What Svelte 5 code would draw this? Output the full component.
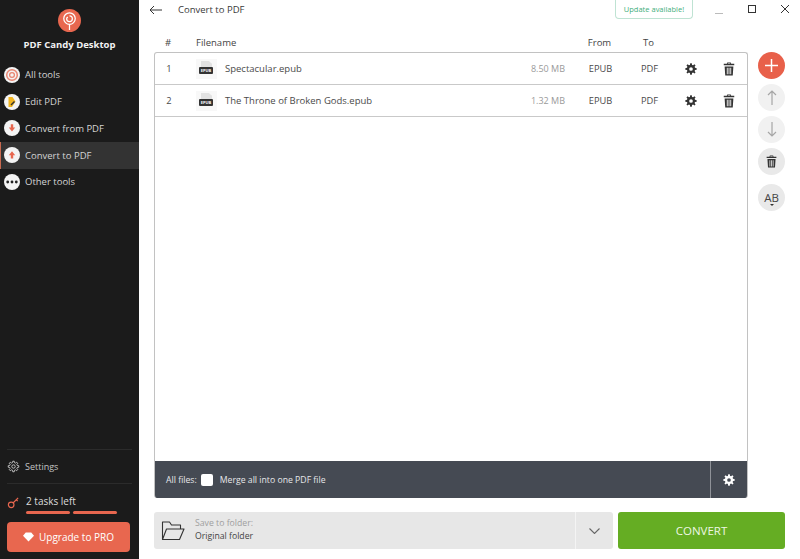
<script>
  const nav = [
    { label: 'All tools', icon: 'spiral' },
    { label: 'Edit PDF', icon: 'edit' },
    { label: 'Convert from PDF', icon: 'down' },
    { label: 'Convert to PDF', icon: 'up', active: true },
    { label: 'Other tools', icon: 'dots' }
  ];
  const files = [
    { n: 1, name: 'Spectacular.epub', size: '8.50 MB' },
    { n: 2, name: 'The Throne of Broken Gods.epub', size: '1.32 MB' }
  ];
  const gear = 'M8.9 1h-1.8l-.3 1.8-1.2.5L4.1 2.2 2.8 3.5l1.1 1.5-.5 1.2L1.5 6.5v1.9l1.9.3.5 1.2-1.1 1.5 1.3 1.3 1.5-1.1 1.2.5.3 1.9h1.8l.3-1.9 1.2-.5 1.5 1.1 1.3-1.3-1.1-1.5.5-1.2 1.9-.3V6.5l-1.9-.3-.5-1.2 1.1-1.5-1.3-1.3-1.5 1.1-1.2-.5zM8 5.400a2.100 2.100 0 1 1 0 4.200 2.100 2.100 0 0 1 0-4.200z';
</script>

{#snippet trash(size)}
  <svg width={size} height={size} viewBox="0 0 16 16" fill="currentColor">
    <path d="M6 .5h4l.5 1.500H14v1.800H2V2h3.500zM6.700 1.500L6.500 2h3l-.2-.5zM3 5h10l-.7 10.500H3.700zM5.500 6.500v7.500h1V6.500zM7.500 6.500v7.500h1V6.500zM9.500 6.500v7.500h1V6.500z" fill-rule="evenodd"/>
  </svg>
{/snippet}

{#snippet gearIcon()}
  <svg width="14" height="14" viewBox="0 0 16 15" fill="currentColor"><path fill-rule="evenodd" d={gear}/></svg>
{/snippet}

<div class="app">
  <aside class="side">
    <div class="logo">
      <svg width="23" height="23" viewBox="0 0 24 24">
        <circle cx="12" cy="12" r="12" fill="#e8674f"/>
        <circle cx="12" cy="10" r="6" fill="none" stroke="#fff" stroke-width="1.300"/>
        <path d="M12 7.200a3 3 0 1 1-3 3c0-1 .6-1.600 1.400-1.800M12 16v6" fill="none" stroke="#fff" stroke-width="1.300"/>
      </svg>
    </div>
    <div class="brand">PDF Candy Desktop</div>
    <nav>
      {#each nav as item}
        <div class="nav-item" class:active={item.active}>
          <span class="nav-icon">
            <svg width="16" height="16" viewBox="0 0 16 16">
              {#if item.icon === 'spiral'}
                <circle cx="8" cy="8" r="5.300" fill="none" stroke="#e98672" stroke-width="1.500"/>
                <circle cx="8" cy="8" r="2.400" fill="none" stroke="#e98672" stroke-width="1.300"/>
              {:else if item.icon === 'edit'}
                <path d="M4.500 3H8.500l3 4.500-3.500 5.500H4.500z" fill="#f2b51f"/>
                <path d="M6.500 10.500l3.500-3.500 1 1-3.500 3.500z" fill="#333"/>
              {:else if item.icon === 'down'}
                <path d="M6.800 4.200h2.400v3.300h2L8 11.500 4.800 7.500h2z" fill="#e8674f"/>
              {:else if item.icon === 'up'}
                <path d="M8 4.300l3.200 4h-2v3.300H6.800V8.300h-2z" fill="#e8674f"/>
              {:else}
                <circle cx="3.700" cy="8" r="1.400" fill="#222"/>
                <circle cx="8" cy="8" r="1.400" fill="#222"/>
                <circle cx="12.300" cy="8" r="1.400" fill="#222"/>
              {/if}
            </svg>
          </span>
          <span>{item.label}</span>
        </div>
      {/each}
    </nav>
    <div class="side-bottom">
      <div class="settings">
        <svg width="13" height="13" viewBox="0 0 16 15" fill="none" stroke="#ccc" stroke-width="1.100"><path d={gear}/></svg>
        <span>Settings</span>
      </div>
      <div class="tasks">
        <svg width="13" height="13" viewBox="0 0 14 14" fill="none" stroke="#e8674f" stroke-width="1.300">
          <circle cx="4.500" cy="9.500" r="3"/><path d="M6.500 7.500L12 2M10 4l1.500 1.500"/>
        </svg>
        <div class="tasks-body">
          <div>2 tasks left</div>
          <div class="bars"><i></i><i></i></div>
        </div>
      </div>
      <button class="upgrade">
        <svg width="11" height="10" viewBox="0 0 12 10" fill="#fff"><path d="M3 0h6l3 3.500L6 10 0 3.500z"/></svg>
        Upgrade to PRO
      </button>
    </div>
  </aside>

  <main class="main">
    <header class="top">
      <svg class="back" width="14" height="10" viewBox="0 0 14 10" fill="none" stroke="#333" stroke-width="1"><path d="M13 5H1M5 1L1 5l4 4"/></svg>
      <span class="title">Convert to PDF</span>
      <span class="update">Update available!</span>
      <div class="winctl">
        <svg width="10" height="10" viewBox="0 0 10 10" stroke="#bbb" fill="none"><path d="M1 9.500h8"/></svg>
        <svg width="10" height="10" viewBox="0 0 10 10" stroke="#333" fill="none"><rect x="1.500" y="1.500" width="7" height="7"/></svg>
        <svg width="10" height="10" viewBox="0 0 10 10" stroke="#333" fill="none"><path d="M1 1l8 8M9 1l-8 8"/></svg>
      </div>
    </header>

    <div class="content">
      <div class="col">
        <div class="thead grid-row">
          <span class="c-n">#</span><span class="fn-head">Filename</span><span></span><span class="c-c">From</span><span class="c-c">To</span><span></span><span></span>
        </div>
        <div class="table">
          <div class="rows">
            {#each files as f}
              <div class="row grid-row">
                <span class="c-n">{f.n}</span>
                <span class="fname">
                  <span class="ficon"><b>EPUB</b></span>
                  {f.name}
                </span>
                <span class="size">{f.size}</span>
                <span class="c-c">EPUB</span>
                <span class="c-c">PDF</span>
                <span class="act">{@render gearIcon()}</span>
                <span class="act">{@render trash(14)}</span>
              </div>
            {/each}
          </div>
          <div class="foot">
            <span class="all">All files:</span>
            <span class="check"></span>
            <span>Merge all into one PDF file</span>
            <span class="foot-gear">{@render gearIcon()}</span>
          </div>
        </div>
      </div>

      <div class="tools">
        <button class="round add" aria-label="add">
          <svg width="13" height="13" viewBox="0 0 13 13" stroke="#fff" stroke-width="1.500"><path d="M6.500 0v13M0 6.500h13"/></svg>
        </button>
        <button class="round" aria-label="up">
          <svg width="10" height="15" viewBox="0 0 10 15" fill="none" stroke="#a6a6a6" stroke-width="1.200"><path d="M5 15V1M1 5l4-4 4 4"/></svg>
        </button>
        <button class="round" aria-label="down">
          <svg width="10" height="15" viewBox="0 0 10 15" fill="none" stroke="#a6a6a6" stroke-width="1.200"><path d="M5 0v14M1 10l4 4 4-4"/></svg>
        </button>
        <button class="round dark" aria-label="delete">{@render trash(13)}</button>
        <button class="round ab">AB<i></i></button>
      </div>
    </div>

    <div class="bottom">
      <div class="folder">
        <svg width="24" height="21" viewBox="0 0 24 21" fill="none" stroke="#333" stroke-width="1.100">
          <path d="M1.500 19.500V2h7l2 3h9v4M1.500 19.500h17L23 9H5.500z" stroke-linejoin="round"/>
        </svg>
        <div class="folder-text">
          <div class="save">Save to folder:</div>
          <div>Original folder</div>
        </div>
        <span class="chev">
          <svg width="11" height="6" viewBox="0 0 11 6" fill="none" stroke="#666" stroke-width="1.100"><path d="M.5.500l5 5 5-5"/></svg>
        </span>
      </div>
      <button class="convert">CONVERT</button>
    </div>
  </main>
</div>

<style>
  :global(body) { margin: 0; background: #fff; }
  .app {
    display: flex;
    width: 800px;
    height: 559px;
    overflow: hidden;
    font-family: "Open Sans", "Noto Sans", sans-serif;
    font-size: 9.500px;
    color: #3a3a3a;
    background: #fff;
  }
  .side {
    width: 139px;
    flex: none;
    background: #1b1b1b;
    color: #d8d8d8;
    display: flex;
    flex-direction: column;
    box-sizing: border-box;
    padding-top: 9px;
  }
  .logo { display: flex; justify-content: center; height: 23px; }
  .logo svg { display: block; }
  .brand {
    text-align: center;
    font-weight: 700;
    color: #f2f2f2;
    font-size: 9.500px;
    line-height: 14px;
    margin-top: 6px;
    margin-bottom: 9.600px;
  }
  .nav-item {
    height: 26.750px;
    display: flex;
    align-items: center;
    gap: 5px;
    padding-left: 4px;
    box-sizing: border-box;
    font-size: 9.500px;
    color: #d4d4d4;
  }
  .nav-item.active {
    background: #333333;
    border-left: 1px solid #c9694f;
    padding-left: 3px;
  }
  .nav-icon {
    width: 16px;
    height: 16px;
    border-radius: 50%;
    background: #f4f4f4;
    display: block;
    flex: none;
  }
  .nav-icon svg { display: block; }
  .side-bottom { margin-top: auto; padding-bottom: 7px; }
  .settings {
    margin: 0 7px 0 7px;
    height: 33px;
    display: flex;
    align-items: center;
    gap: 5px;
    border-top: 1px solid #2b2b2b;
    border-bottom: 1px solid #2b2b2b;
    font-size: 9px;
    color: #c4c4c4;
  }
  .tasks {
    display: flex;
    gap: 6px;
    margin: 10px 0 0 7px;
    font-size: 10px;
    color: #dcdcdc;
    line-height: 15px;
  }
  .tasks > svg { margin-top: 2px; }
  .bars { display: flex; gap: 3px; margin-top: 2px; }
  .bars i { display: block; width: 44px; height: 3.500px; border-radius: 2px; background: #e8674f; }
  .upgrade {
    display: flex;
    align-items: center;
    justify-content: center;
    gap: 5px;
    box-sizing: border-box;
    width: 123px;
    height: 30px;
    margin: 8px 0 0 7px;
    border: 0;
    border-radius: 4px;
    background: #e8674f;
    color: #fff;
    font: inherit;
    font-size: 10px;
  }

  .main { flex: 1; display: flex; flex-direction: column; min-width: 0; }
  .top {
    height: 20px;
    flex: none;
    display: flex;
    align-items: center;
    padding-left: 10px;
  }
  .back { margin-right: 15px; margin-top: -1px; }
  .title { font-size: 9.500px; margin-top: -1px; }
  .update {
    margin-left: auto;
    margin-top: -2px;
    box-sizing: border-box;
    width: 78px;
    height: 19px;
    display: flex;
    align-items: center;
    justify-content: center;
    font-size: 7.500px;
    color: #3fae7c;
    border: 1px solid #bfe3d3;
    border-top: 0;
    border-radius: 0 0 4px 4px;
  }
  .winctl {
    display: flex;
    align-items: center;
    gap: 23px;
    margin-left: 21px;
    margin-right: 10px;
    margin-top: -2px;
  }
  .winctl svg { display: block; }

  .content { display: flex; flex: 1; min-height: 0; padding-left: 15px; }
  .col { width: 594px; display: flex; flex-direction: column; flex: none; }
  .grid-row {
    display: grid;
    grid-template-columns: 41px 313px 64px 55px 43px 40px 36px;
    align-items: center;
  }
  .thead { height: 32px; flex: none; box-sizing: border-box; padding-top: 12px; font-size: 9.500px; color: #444; }
  .fn-head { padding-left: 1px; }
  .c-n { text-align: center; padding-right: 13px; }
  .c-c { text-align: center; }
  .table {
    flex: 1;
    display: flex;
    flex-direction: column;
    box-sizing: border-box;
    border: 1px solid #c2c2c2;
    border-bottom: 0;
    border-radius: 3px;
    overflow: hidden;
  }
  .rows { flex: 1; }
  .row { height: 31px; border-bottom: 1px solid #c9c9c9; color: #4a4a4a; font-size: 9.300px; }
  .fname { display: flex; align-items: center; gap: 8px; font-size: 9.500px; }
  .ficon {
    position: relative;
    width: 21px;
    height: 20px;
    background: #f8f8f8;
    display: block;
    flex: none;
    box-sizing: border-box;
    padding-top: 8px;
  }
  .ficon::before {
    content: "";
    position: absolute;
    left: 5px;
    top: 2px;
    width: 11px;
    height: 8px;
    background: #e2e2e2;
    clip-path: polygon(0 0, 65% 0, 100% 40%, 100% 100%, 0 100%);
  }
  .ficon b {
    position: relative;
    display: block;
    width: 14px;
    height: 7px;
    margin-left: 3px;
    border-radius: 1px;
    background: #333;
    color: #fff;
    font-size: 4px;
    line-height: 7px;
    font-weight: 700;
    text-align: center;
  }
  .size { text-align: right; color: #9a9a9a; padding-right: 8px; font-size: 9px; }
  .act { display: flex; justify-content: center; color: #333; }
  .act svg { display: block; }
  .foot {
    height: 37px;
    flex: none;
    background: #454a53;
    color: #e6e7e9;
    display: flex;
    align-items: center;
    padding-left: 11px;
    font-size: 8.700px;
  }
  .all { margin-right: 4px; }
  .check { width: 12px; height: 12px; border-radius: 2px; background: #fff; margin-right: 7px; }
  .foot-gear {
    margin-left: auto;
    width: 37px;
    box-sizing: border-box;
    align-self: stretch;
    display: flex;
    align-items: center;
    justify-content: center;
    border-left: 1px solid #8f9298;
    color: #fff;
  }

  .tools {
    display: flex;
    flex-direction: column;
    align-items: center;
    width: 27px;
    margin-left: 10px;
    padding-top: 32px;
    gap: 5px;
  }
  .round {
    width: 27px;
    height: 27px;
    flex: none;
    border-radius: 50%;
    border: 0;
    padding: 0;
    background: #f1f1f1;
    display: flex;
    align-items: center;
    justify-content: center;
    color: #333;
    font: inherit;
  }
  .round svg { display: block; }
  .add { background: #e8604a; }
  .dark { background: #e9e9e9; }
  .ab {
    background: #e9e9e9;
    font-size: 11.500px;
    margin-top: 4px;
    position: relative;
    color: #444;
  }
  .ab i {
    position: absolute;
    left: 11.500px;
    top: 20px;
    border: 2px solid transparent;
    border-top: 2px solid #333;
  }
  .bottom {
    display: flex;
    gap: 5px;
    height: 37px;
    flex: none;
    margin: 14px 15px 10px 15px;
  }
  .folder {
    width: 459px;
    flex: none;
    background: #e7e7e7;
    border-radius: 3px;
    display: flex;
    align-items: center;
    padding-left: 8px;
    box-sizing: border-box;
    font-size: 8.700px;
    color: #444;
  }
  .folder svg:first-child { margin-left: -1px; }
  .folder-text { margin-left: 10px; line-height: 13px; margin-top: -2px; }
  .save { color: #a0a0a0; }
  .chev {
    margin-left: auto;
    width: 37px;
    align-self: stretch;
    display: flex;
    align-items: center;
    justify-content: center;
    border-left: 1px solid #f4f4f4;
  }
  .convert {
    flex: 1;
    border: 0;
    border-radius: 3px;
    background: #65ad23;
    color: #eef7e4;
    font: inherit;
    font-size: 11.500px;
  }
</style>
